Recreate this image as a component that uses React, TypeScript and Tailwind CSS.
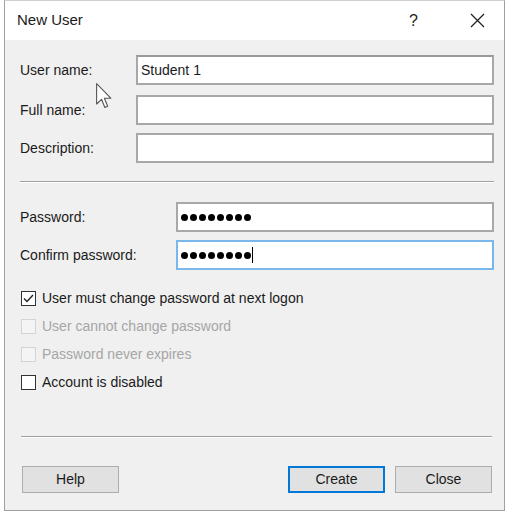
import React from "react";

const font = { fontFamily: '"Liberation Sans", Arial, sans-serif' };

function Dots() {
  return (
    <div className="flex items-center gap-[2px]">
      {Array.from({ length: 8 }).map((_, i) => (
        <span key={i} className="block w-[7px] h-[7px] rounded-full bg-black" />
      ))}
    </div>
  );
}

function Check({ checked, disabled, label }: { checked?: boolean; disabled?: boolean; label: string }) {
  return (
    <div className="flex items-center h-[28px]">
      <div
        className={
          "w-[15px] h-[15px] border flex items-center justify-center " +
          (disabled ? "border-[#d4d4d4] bg-[#f4f4f4]" : "border-[#333333] bg-white")
        }
      >
        {checked && (
          <svg width="13" height="13" viewBox="0 0 13 13">
            <path d="M2 6.5 L5 9.5 L11 3" fill="none" stroke="#222" strokeWidth="1.4" />
          </svg>
        )}
      </div>
      <span className={"ml-[6px] text-[14px] " + (disabled ? "text-[#a6a6a6]" : "text-[#1a1a1a]")}>{label}</span>
    </div>
  );
}

function Btn({ label, primary }: { label: string; primary?: boolean }) {
  return (
    <div
      className={
        "w-[97px] h-[27px] flex items-center justify-center text-[14px] text-[#1a1a1a] bg-[#e1e1e1] " +
        (primary ? "border-2 border-[#0078d7]" : "border border-[#adadad]")
      }
    >
      {label}
    </div>
  );
}

export default function App() {
  return (
    <div className="w-[509px] h-[516px] bg-white relative" style={font}>
      <div className="absolute left-[4px] top-0 w-[501px] h-[511px] border border-[#a0a0a0] border-t-[#d0d0d0] flex flex-col">
        {/* title bar */}
        <div className="h-[39px] bg-white flex items-center pl-[12px] pr-[19px]">
          <span className="text-[15px] text-[#1a1a1a]">New User</span>
          <span className="ml-auto text-[16px] text-[#1a1a1a] mr-[52px]">?</span>
          <svg width="15" height="15" viewBox="0 0 15 15">
            <path d="M1 1 L14 14 M14 1 L1 14" stroke="#222" strokeWidth="1.3" />
          </svg>
        </div>
        {/* body */}
        <div className="flex-1 bg-[#f0f0f0] flex flex-col pl-[15px] pr-[10px] text-[#1a1a1a] text-[14px]">
          <div className="flex items-center mt-[15px] h-[30px]">
            <span className="w-[116px]">User name:</span>
            <div className="flex-1 h-[30px] bg-white border-2 border-[#a8a8a8] border-t-[#9a9a9a] flex items-center pl-[3px]">
              Student 1
            </div>
          </div>
          <div className="flex items-center mt-[10px] h-[30px]">
            <span className="w-[116px]">Full name:</span>
            <div className="flex-1 h-[30px] bg-white border-2 border-[#a8a8a8]" />
          </div>
          <div className="flex items-center mt-[8px] h-[30px]">
            <span className="w-[116px]">Description:</span>
            <div className="flex-1 h-[30px] bg-white border-2 border-[#a8a8a8]" />
          </div>
          <div className="mt-[18px] h-[2px] border-t border-[#a0a0a0] border-b border-b-white" />
          <div className="flex items-center mt-[19px] h-[30px]">
            <span className="w-[156px]">Password:</span>
            <div className="flex-1 h-[30px] bg-white border-2 border-[#a8a8a8] flex items-center pl-[3px]">
              <Dots />
            </div>
          </div>
          <div className="flex items-center mt-[8px] h-[30px]">
            <span className="w-[156px]">Confirm password:</span>
            <div className="flex-1 h-[30px] bg-white border-2 border-[#7ab7ea] flex items-center pl-[3px]">
              <Dots />
              <span className="block w-[1px] h-[16px] bg-black ml-[1px]" />
            </div>
          </div>
          <div className="flex flex-col mt-[14px] pl-[1px]">
            <Check checked label="User must change password at next logon" />
            <Check disabled label="User cannot change password" />
            <Check disabled label="Password never expires" />
            <Check label="Account is disabled" />
          </div>
          <div className="mt-[40px] ml-[1px] mr-[2px] h-[2px] border-t border-[#a0a0a0] border-b border-b-white" />
          <div className="flex mt-[28px] pl-[2px] pr-[2px]">
            <Btn label="Help" />
            <div className="ml-auto flex gap-[10px]">
              <Btn label="Create" primary />
              <Btn label="Close" />
            </div>
          </div>
        </div>
      </div>
      {/* mouse pointer */}
      <svg className="absolute left-[96px] top-[83px]" width="16" height="26" viewBox="0 0 13 21">
        <path d="M0.5 0.5 L0.5 17 L4.5 13.2 L7.2 19.8 L9.5 18.8 L6.8 12.3 L12 12.3 Z" fill="white" stroke="#555" strokeWidth="0.9" strokeLinejoin="round" />
      </svg>
    </div>
  );
}
